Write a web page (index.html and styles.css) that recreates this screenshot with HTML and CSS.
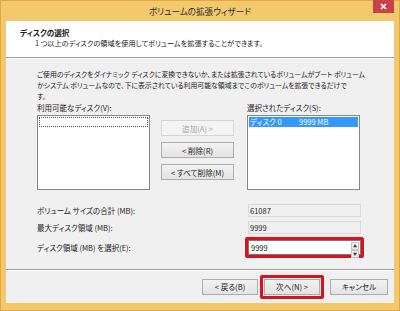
FILE: index.html
```html
<!DOCTYPE html>
<html lang="ja">
<head>
    <meta charset="UTF-8">
    <title>ボリュームの拡張ウィザード</title>
    <link rel="stylesheet" href="styles.css">
</head>
<body>
    <div class="window">
        <div class="titlebar">
            <span></span>
            <span class="title">ボリュームの拡張ウィザード</span>
            <span class="close">
                <svg width="7" height="7" viewBox="0 0 7 7"><path d="M1 1 L6 6 M6 1 L1 6" stroke="#fff" stroke-width="1.6"/></svg>
            </span>
        </div>
        <div class="client">
            <div class="header">
                <div class="header-title">ディスクの選択</div>
                <div class="header-sub">1 つ以上のディスクの領域を使用してボリュームを拡張することができます。</div>
            </div>
            <div class="body">
                <p class="desc">ご使用のディスクをダイナミック ディスクに変換できないか、または拡張されているボリュームがブート ボリューム<br>かシステム ボリュームなので、下に表示されている利用可能な領域までこのボリュームを拡張できるだけで<br>す。</p>
                <div class="lists">
                    <div class="list-col">
                        <div class="label">利用可能なディスク(V):</div>
                        <div class="listbox"><div class="focus-row"></div></div>
                    </div>
                    <div class="move-btns">
                        <button class="btn" disabled>追加(A) &gt;</button>
                        <button class="btn">&lt; 削除(R)</button>
                        <button class="btn">&lt; すべて削除(M)</button>
                    </div>
                    <div class="list-col">
                        <div class="label">選択されたディスク(S):</div>
                        <div class="listbox">
                            <div class="sel-row"><span class="disk">ディスク 0</span><span>9999 MB</span></div>
                        </div>
                    </div>
                </div>
                <div class="fields">
                    <div class="field-row">
                        <span class="label">ボリューム サイズの合計 (MB):</span>
                        <span class="readonly">61087</span>
                    </div>
                    <div class="field-row">
                        <span class="label">最大ディスク領域 (MB):</span>
                        <span class="readonly">9999</span>
                    </div>
                    <div class="field-row spin-row">
                        <span class="label">ディスク領域 (MB) を選択(E):</span>
                        <span class="highlight">
                            <span class="spin">
                                <span class="spin-value">9999</span>
                                <span class="spin-arrows">
                                    <span class="arrow">▲</span>
                                    <span class="arrow">▼</span>
                                </span>
                            </span>
                        </span>
                    </div>
                </div>
            </div>
            <div class="footer">
                <button class="btn nav-btn">&lt; 戻る(B)</button>
                <span class="highlight next-wrap"><button class="btn nav-btn">次へ(N) &gt;</button></span>
                <button class="btn nav-btn cancel">キャンセル</button>
            </div>
        </div>
    </div>
</body>
</html>
```

FILE: styles.css
```css
body {
    margin: 0;
    font-family: "Noto Sans CJK JP", "Noto Sans", sans-serif;
    font-size: 7.5px;
    font-feature-settings: "palt";
    color: #1a1a1a;
}

.window {
    width: 400px;
    height: 311px;
    box-sizing: border-box;
    background: #f3c96c;
    border: 1px solid #dfa948;
    display: flex;
    flex-direction: column;
}

.titlebar {
    height: 20px;
    display: grid;
    grid-template-columns: 1fr auto 1fr;
    align-items: start;
}

.title {
    font-size: 8.6px;
    line-height: 21px;
    color: #2a2a2a;
}

.close {
    justify-self: end;
    margin-right: 5px;
    width: 21px;
    height: 13px;
    margin-top: -1px;
    background: #c7434b;
    display: flex;
    align-items: center;
    justify-content: center;
}

.client {
    flex: 1;
    margin: 0 5px 7px 5px;
    background: #f0f0f0;
    display: flex;
    flex-direction: column;
}

.header {
    height: 37px;
    background: #fff;
    border-bottom: 1px solid #a0a0a0;
    box-sizing: border-box;
    padding: 7px 0 0 14px;
    line-height: 10px;
}

.header-title {
    font-weight: bold;
    font-size: 7.6px;
}

.header-sub {
    padding-left: 15px;
    font-size: 7.2px;
}

.body {
    flex: 1;
    padding: 10px 32px 0 31px;
    border-top: 1px solid #fff;
}

.desc {
    margin: 0;
    font-size: 6.9px;
    line-height: 11px;
    white-space: nowrap;
}

.lists {
    display: flex;
    align-items: flex-start;
}

.list-col {
    display: flex;
    flex-direction: column;
}

.label {
    line-height: 11px;
}

.listbox {
    margin-top: 2px;
    width: 113px;
    height: 75px;
    box-sizing: border-box;
    background: #fff;
    border: 1px solid #828790;
    padding: 1px;
}

.focus-row {
    height: 10px;
    border: 1px dotted #555;
    box-sizing: border-box;
}

.sel-row {
    height: 10px;
    background: #3399ff;
    color: #fff;
    line-height: 10px;
    padding-left: 1px;
    display: flex;
}

.disk {
    width: 49px;
}

.move-btns {
    margin: 18px 13px 0 11px;
    display: flex;
    flex-direction: column;
    gap: 6px;
}

.btn {
    font-family: inherit;
    font-size: 7.6px;
    font-feature-settings: "palt";
    color: #1a1a1a;
    width: 73px;
    height: 16px;
    padding: 0;
    background: linear-gradient(#f2f2f2, #e3e3e3);
    border: 1px solid #adadad;
    box-sizing: border-box;
}

.btn:disabled {
    color: #a8a8a8;
    background: #f4f4f4;
    border-color: #d5d5d5;
}

.fields {
    margin-top: 12px;
    display: flex;
    flex-direction: column;
}

.field-row {
    display: grid;
    grid-template-columns: 211px 113px;
    align-items: center;
    height: 17px;
}

.readonly {
    height: 13px;
    box-sizing: border-box;
    border: 1px solid #d9d9d9;
    background: #f0f0f0;
    line-height: 11px;
    padding-left: 1px;
}

.spin-row {
    height: 22px;
}

.highlight {
    border: 3px solid #d7141e;
    border-radius: 2px;
}

.spin-row .highlight {
    margin-left: -3px;
    width: 113px;
}

.spin {
    height: 15px;
    box-sizing: border-box;
    display: flex;
    background: #fff;
    border: 1px solid #7a7a7a;
    line-height: 13px;
    padding-left: 2px;
}

.spin-value {
    flex: 1;
}

.spin-arrows {
    width: 8px;
    display: flex;
    flex-direction: column;
    margin: 1px 1px 1px 0;
}

.arrow {
    flex: 1;
    font-size: 4px;
    line-height: 6px;
    text-align: center;
    background: #f0f0f0;
    border: 1px solid #c5c5c5;
    color: #333;
}

.footer {
    height: 33px;
    border-top: 1px solid #a0a0a0;
    box-shadow: inset 0 1px 0 #fff;
    display: flex;
    align-items: center;
    justify-content: flex-end;
    padding: 0 6px 0 0;
    gap: 2px;
}

.nav-btn {
    width: 56px;
}

.next-wrap {
    display: flex;
    padding: 1px;
}

.cancel {
    width: 58px;
    margin-left: 4px;
}
```
